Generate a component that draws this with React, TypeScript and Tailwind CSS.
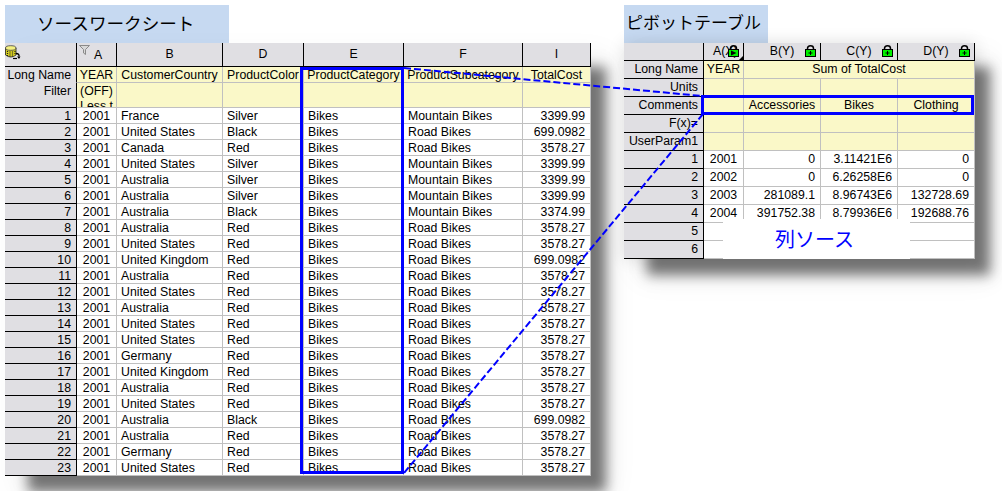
import React from 'react';

type Align = 'l' | 'c' | 'r';

const font = { l: 'text-left pl-[4px]', c: 'text-center', r: 'text-right pr-[5px]' };

const sourceRows: string[][] = [
  ['France', 'Silver', 'Mountain Bikes', '3399.99'],
  ['United States', 'Black', 'Road Bikes', '699.0982'],
  ['Canada', 'Red', 'Road Bikes', '3578.27'],
  ['United States', 'Silver', 'Mountain Bikes', '3399.99'],
  ['Australia', 'Silver', 'Mountain Bikes', '3399.99'],
  ['Australia', 'Silver', 'Mountain Bikes', '3399.99'],
  ['Australia', 'Black', 'Mountain Bikes', '3374.99'],
  ['Australia', 'Red', 'Road Bikes', '3578.27'],
  ['United States', 'Red', 'Road Bikes', '3578.27'],
  ['United Kingdom', 'Red', 'Road Bikes', '699.0982'],
  ['Australia', 'Red', 'Road Bikes', '3578.27'],
  ['United States', 'Red', 'Road Bikes', '3578.27'],
  ['Australia', 'Red', 'Road Bikes', '3578.27'],
  ['United States', 'Red', 'Road Bikes', '3578.27'],
  ['United States', 'Red', 'Road Bikes', '3578.27'],
  ['Germany', 'Red', 'Road Bikes', '3578.27'],
  ['United Kingdom', 'Red', 'Road Bikes', '3578.27'],
  ['Australia', 'Red', 'Road Bikes', '3578.27'],
  ['United States', 'Red', 'Road Bikes', '3578.27'],
  ['Australia', 'Black', 'Road Bikes', '699.0982'],
  ['Australia', 'Red', 'Road Bikes', '3578.27'],
  ['Germany', 'Red', 'Road Bikes', '3578.27'],
  ['United States', 'Red', 'Road Bikes', '3578.27'],
];

const pivotRows: string[][] = [
  ['2001', '0', '3.11421E6', '0'],
  ['2002', '0', '6.26258E6', '0'],
  ['2003', '281089.1', '8.96743E6', '132728.69'],
  ['2004', '391752.38', '8.79936E6', '192688.76'],
  ['', '', '', ''],
  ['', '', '', ''],
];

function HeadCell({ children }: { children?: React.ReactNode }) {
  return (
    <div className="relative flex items-center justify-center bg-[#e0dfe3] border-r border-b border-black overflow-hidden">
      {children}
    </div>
  );
}

function RowLabel({ text, soft }: { text: string; soft?: boolean }) {
  return (
    <div className={`bg-[#e0dfe3] border-r border-b border-r-black overflow-hidden whitespace-nowrap text-right pr-[5px] ${soft ? 'border-b-[#e0dfe3]' : 'border-b-black'}`}>
      {text}
    </div>
  );
}

function DataCell({ text, align = 'l', yellow }: { text?: string; align?: Align; yellow?: boolean }) {
  return (
    <div className={`border-r border-b border-[#c0c0c0] overflow-hidden whitespace-nowrap ${font[align]} ${yellow ? 'bg-[#faf8c8]' : 'bg-white'}`}>
      {text}
    </div>
  );
}

function DbIcon() {
  return (
    <svg width="16" height="15" viewBox="0 0 16 15" className="absolute left-0 top-[2px]">
      <path d="M0.500 3 V10 Q6 14 11 10 V3 Z" fill="#d8d020" stroke="#222" strokeWidth="0.800" />
      <ellipse cx="5.750" cy="3" rx="5.250" ry="2.300" fill="#f4f080" stroke="#444" strokeWidth="0.800" />
      <path d="M2.500 6v5M5 6.500v5.500M7.500 6.500v5M10 6v4" stroke="#222" strokeWidth="1.200" strokeDasharray="1 1" />
      <path d="M11 8.500 Q14.500 8.500 14 11.500" fill="none" stroke="#000" strokeWidth="1.300" />
      <path d="M12 11.500 H15.500 L14 14 Z" fill="#000" />
      <path d="M8 13.500 H12" stroke="#000" strokeWidth="1.200" />
    </svg>
  );
}

function FilterIcon() {
  return (
    <svg width="11" height="10" viewBox="0 0 11 10" className="absolute left-[2px] top-[2px]">
      <path d="M0.500 0.500 H10.500 L6.500 4.500 V9.500 L4.500 8 V4.500 Z" fill="#d8d8d8" stroke="#8a8a8a" />
    </svg>
  );
}

function LockIcon({ play, className }: { play?: boolean; className: string }) {
  return (
    <svg width="11" height="12" viewBox="0 0 11 12" className={`absolute ${className}`}>
      <path d="M2.500 5 V3.500 Q2.500 0.800 5.500 0.800 Q8.500 0.800 8.500 3.500 V5" fill="none" stroke="#000" strokeWidth="1.500" />
      <rect x="0.500" y="4.500" width="10" height="7" fill="#00f000" stroke="#000" />
      {play ? (
        <path d="M3 5.500 L8.500 8 L3 10.500 Z" fill="#000" />
      ) : (
        <path d="M5.500 6 V10 M3.500 8 H7.500" stroke="#000" strokeWidth="1" />
      )}
    </svg>
  );
}

function Title({ text, width, pad, size }: { text: string; width: string; pad: string; size: string }) {
  return (
    <div className={`h-[38px] bg-[#c6d9f1] flex items-center whitespace-nowrap text-black ${size} ${width} ${pad}`}>
      {text}
    </div>
  );
}

function SourceSheet() {
  return (
    <div className="relative w-[586px] shadow-[19px_20px_12px_-4px_rgba(85,85,85,0.8),16px_16px_30px_rgba(0,0,0,0.08)]">
      <div className="grid grid-cols-[72px_40px_106px_81px_100px_119px_68px] grid-rows-[24px_16px_25px_repeat(23,16px)] leading-[17px]">
        <HeadCell><DbIcon /></HeadCell>
        <HeadCell><FilterIcon /><span className="pl-[3px] pt-[1px]">A</span></HeadCell>
        <HeadCell>B</HeadCell>
        <HeadCell>D</HeadCell>
        <HeadCell>E</HeadCell>
        <HeadCell>F</HeadCell>
        <HeadCell>I</HeadCell>

        <RowLabel text="Long Name" soft />
        <DataCell text="YEAR" align="c" yellow />
        <DataCell text="CustomerCountry" align="c" yellow />
        <DataCell text="ProductColor" align="c" yellow />
        <DataCell text="ProductCategory" align="c" yellow />
        <DataCell text="ProductSubcategory" align="c" yellow />
        <DataCell text="TotalCost" align="c" yellow />

        <RowLabel text="Filter" />
        <div className="bg-[#faf8c8] border-r border-b border-[#c0c0c0] overflow-hidden text-center whitespace-nowrap leading-[15px] pt-[1px]">
          (OFF)<br />Less t
        </div>
        <DataCell yellow />
        <DataCell yellow />
        <DataCell yellow />
        <DataCell yellow />
        <DataCell yellow />

        {sourceRows.map((row, i) => (
          <React.Fragment key={i}>
            <RowLabel text={String(i + 1)} />
            <DataCell text="2001" align="c" />
            <DataCell text={row[0]} />
            <DataCell text={row[1]} />
            <DataCell text="Bikes" />
            <DataCell text={row[2]} />
            <DataCell text={row[3]} align="r" />
          </React.Fragment>
        ))}
      </div>
      {/* selected column */}
      <div className="absolute left-[295px] top-[24px] w-[104px] h-[407px] border-[3px] border-[#0000ff]" />
    </div>
  );
}

function PivotSheet() {
  return (
    <div className="relative w-[351px] shadow-[19px_20px_12px_-4px_rgba(85,85,85,0.8),0_0_16px_rgba(0,0,0,0.12),16px_16px_30px_rgba(0,0,0,0.08)]">
      <div className="grid grid-cols-[80px_40px_77px_77px_77px] auto-rows-[18px] leading-[17px]">
        <HeadCell />
        <HeadCell>
          <span className="absolute left-[9px] top-0">A(X)</span>
          <LockIcon play className="left-[24px] top-[2px]" />
          <svg width="4" height="4" viewBox="0 0 4 4" className="absolute right-0 bottom-0">
            <path d="M4 0 V4 H0 Z" fill="#000" />
          </svg>
        </HeadCell>
        <HeadCell>B(Y)<LockIcon className="left-[61px] top-[2px]" /></HeadCell>
        <HeadCell>C(Y)<LockIcon className="left-[61px] top-[2px]" /></HeadCell>
        <HeadCell>D(Y)<LockIcon className="left-[61px] top-[2px]" /></HeadCell>

        <RowLabel text="Long Name" />
        <DataCell text="YEAR" align="c" yellow />
        <div className="col-span-3 bg-[#faf8c8] border-r border-b border-[#c0c0c0] text-center">Sum of TotalCost</div>

        {[
          ['Units', '', '', ''],
          ['Comments', 'Accessories', 'Bikes', 'Clothing'],
          ['F(x)=', '', '', ''],
          ['UserParam1', '', '', ''],
        ].map(row => (
          <React.Fragment key={row[0]}>
            <RowLabel text={row[0]} />
            <DataCell yellow />
            <DataCell text={row[1]} align="c" yellow />
            <DataCell text={row[2]} align="c" yellow />
            <DataCell text={row[3]} align="c" yellow />
          </React.Fragment>
        ))}

        {pivotRows.map((row, i) => (
          <React.Fragment key={i}>
            <RowLabel text={String(i + 1)} />
            <DataCell text={row[0]} align="c" />
            <DataCell text={row[1]} align="r" />
            <DataCell text={row[2]} align="r" />
            <DataCell text={row[3]} align="r" />
          </React.Fragment>
        ))}
      </div>
      {/* selected row */}
      <div className="absolute left-[77px] top-[52px] w-[273px] h-[20px] border-[3px] border-[#0000ff]" />
      {/* caption patch */}
      <div className="absolute left-[99px] top-[176px] w-[187px] h-[40px] bg-white flex items-center justify-center text-[20px] text-[#0000ff] pr-[4px] pt-[1px]">
        列ソース
      </div>
    </div>
  );
}

export default function App() {
  return (
    <div className="relative w-[1002px] h-[491px] bg-white overflow-hidden pl-[5px] pt-[5px] flex gap-[33px] text-[12.3px] text-black font-['Liberation_Sans','Noto_Sans_CJK_JP',sans-serif]">
      <div className="w-[586px]">
        <Title text="ソースワークシート" width="w-[224px]" pad="pl-[32px]" size="text-[17.6px]" />
        <SourceSheet />
      </div>
      <div className="w-[351px]">
        <Title text="ピボットテーブル" width="w-[144px]" pad="pl-[2px]" size="text-[17px]" />
        <PivotSheet />
      </div>
      {/* links between selection and pivot row */}
      <svg width="1002" height="491" className="absolute left-0 top-0 pointer-events-none">
        <path d="M404 68 L702 96" stroke="#0000ff" strokeWidth="2" strokeDasharray="7 3" fill="none" />
        <path d="M703 114 L404 473" stroke="#0000ff" strokeWidth="2" strokeDasharray="7 3" fill="none" />
      </svg>
    </div>
  );
}
